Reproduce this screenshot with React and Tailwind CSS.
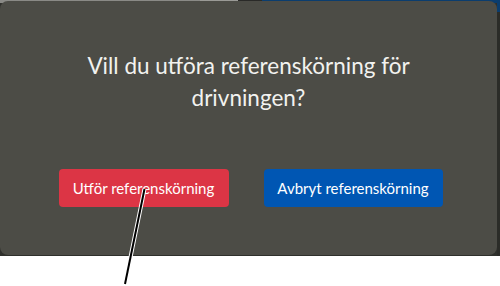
export default function App() {
  return (
    <div className="relative w-[500px] h-[286px] bg-white overflow-hidden" style={{ fontFamily: '"Source Sans Pro", "Lato", "Noto Sans", sans-serif' }}>
      {/* background app peeking behind dialog */}
      <div className="flex h-[256px]">
        <div className="flex-1 flex flex-col">
          <div className="flex h-[3px]">
            <div className="w-[200px] bg-[#8a8a86]"></div>
            <div className="w-[38px] bg-[#9a9a96]"></div>
            <div className="w-[24px] bg-[#2a2a28]"></div>
            <div className="flex-1 bg-[#0b3d6e]"></div>
          </div>
          <div className="flex-1 bg-[#2f302c]"></div>
        </div>
        <div className="w-[3px] flex flex-col">
          <div className="h-[12px] bg-[#0b3d6e]"></div>
          <div className="flex-1 bg-[#2b2c28]"></div>
        </div>
      </div>

      {/* dialog */}
      <div className="absolute left-0 top-[1px] w-[497px] h-[254px] rounded-[8px] bg-[#4c4c46] flex flex-col items-center">
        <h2 className="mt-[49px] text-[22.5px] leading-[32px] text-[#f2f2ef] text-center font-normal w-[360px]">
          Vill du utföra referenskörning för drivningen?
        </h2>
        <div className="mt-[55px] flex gap-[35px] pl-[4px]">
          <button className="w-[170px] h-[38px] rounded-[4px] bg-[#dc3545] text-white text-[15px]">
            Utför referenskörning
          </button>
          <button className="w-[179px] h-[38px] rounded-[4px] bg-[#0056b3] text-white text-[15px]">
            Avbryt referenskörning
          </button>
        </div>
      </div>

      {/* annotation line */}
      <svg className="absolute left-0 top-0 pointer-events-none" width="500" height="286">
        <line x1="144.5" y1="189" x2="125" y2="284" stroke="white" strokeWidth="4" />
        <line x1="144.5" y1="189" x2="125" y2="284" stroke="black" strokeWidth="2" />
      </svg>
    </div>
  );
}
